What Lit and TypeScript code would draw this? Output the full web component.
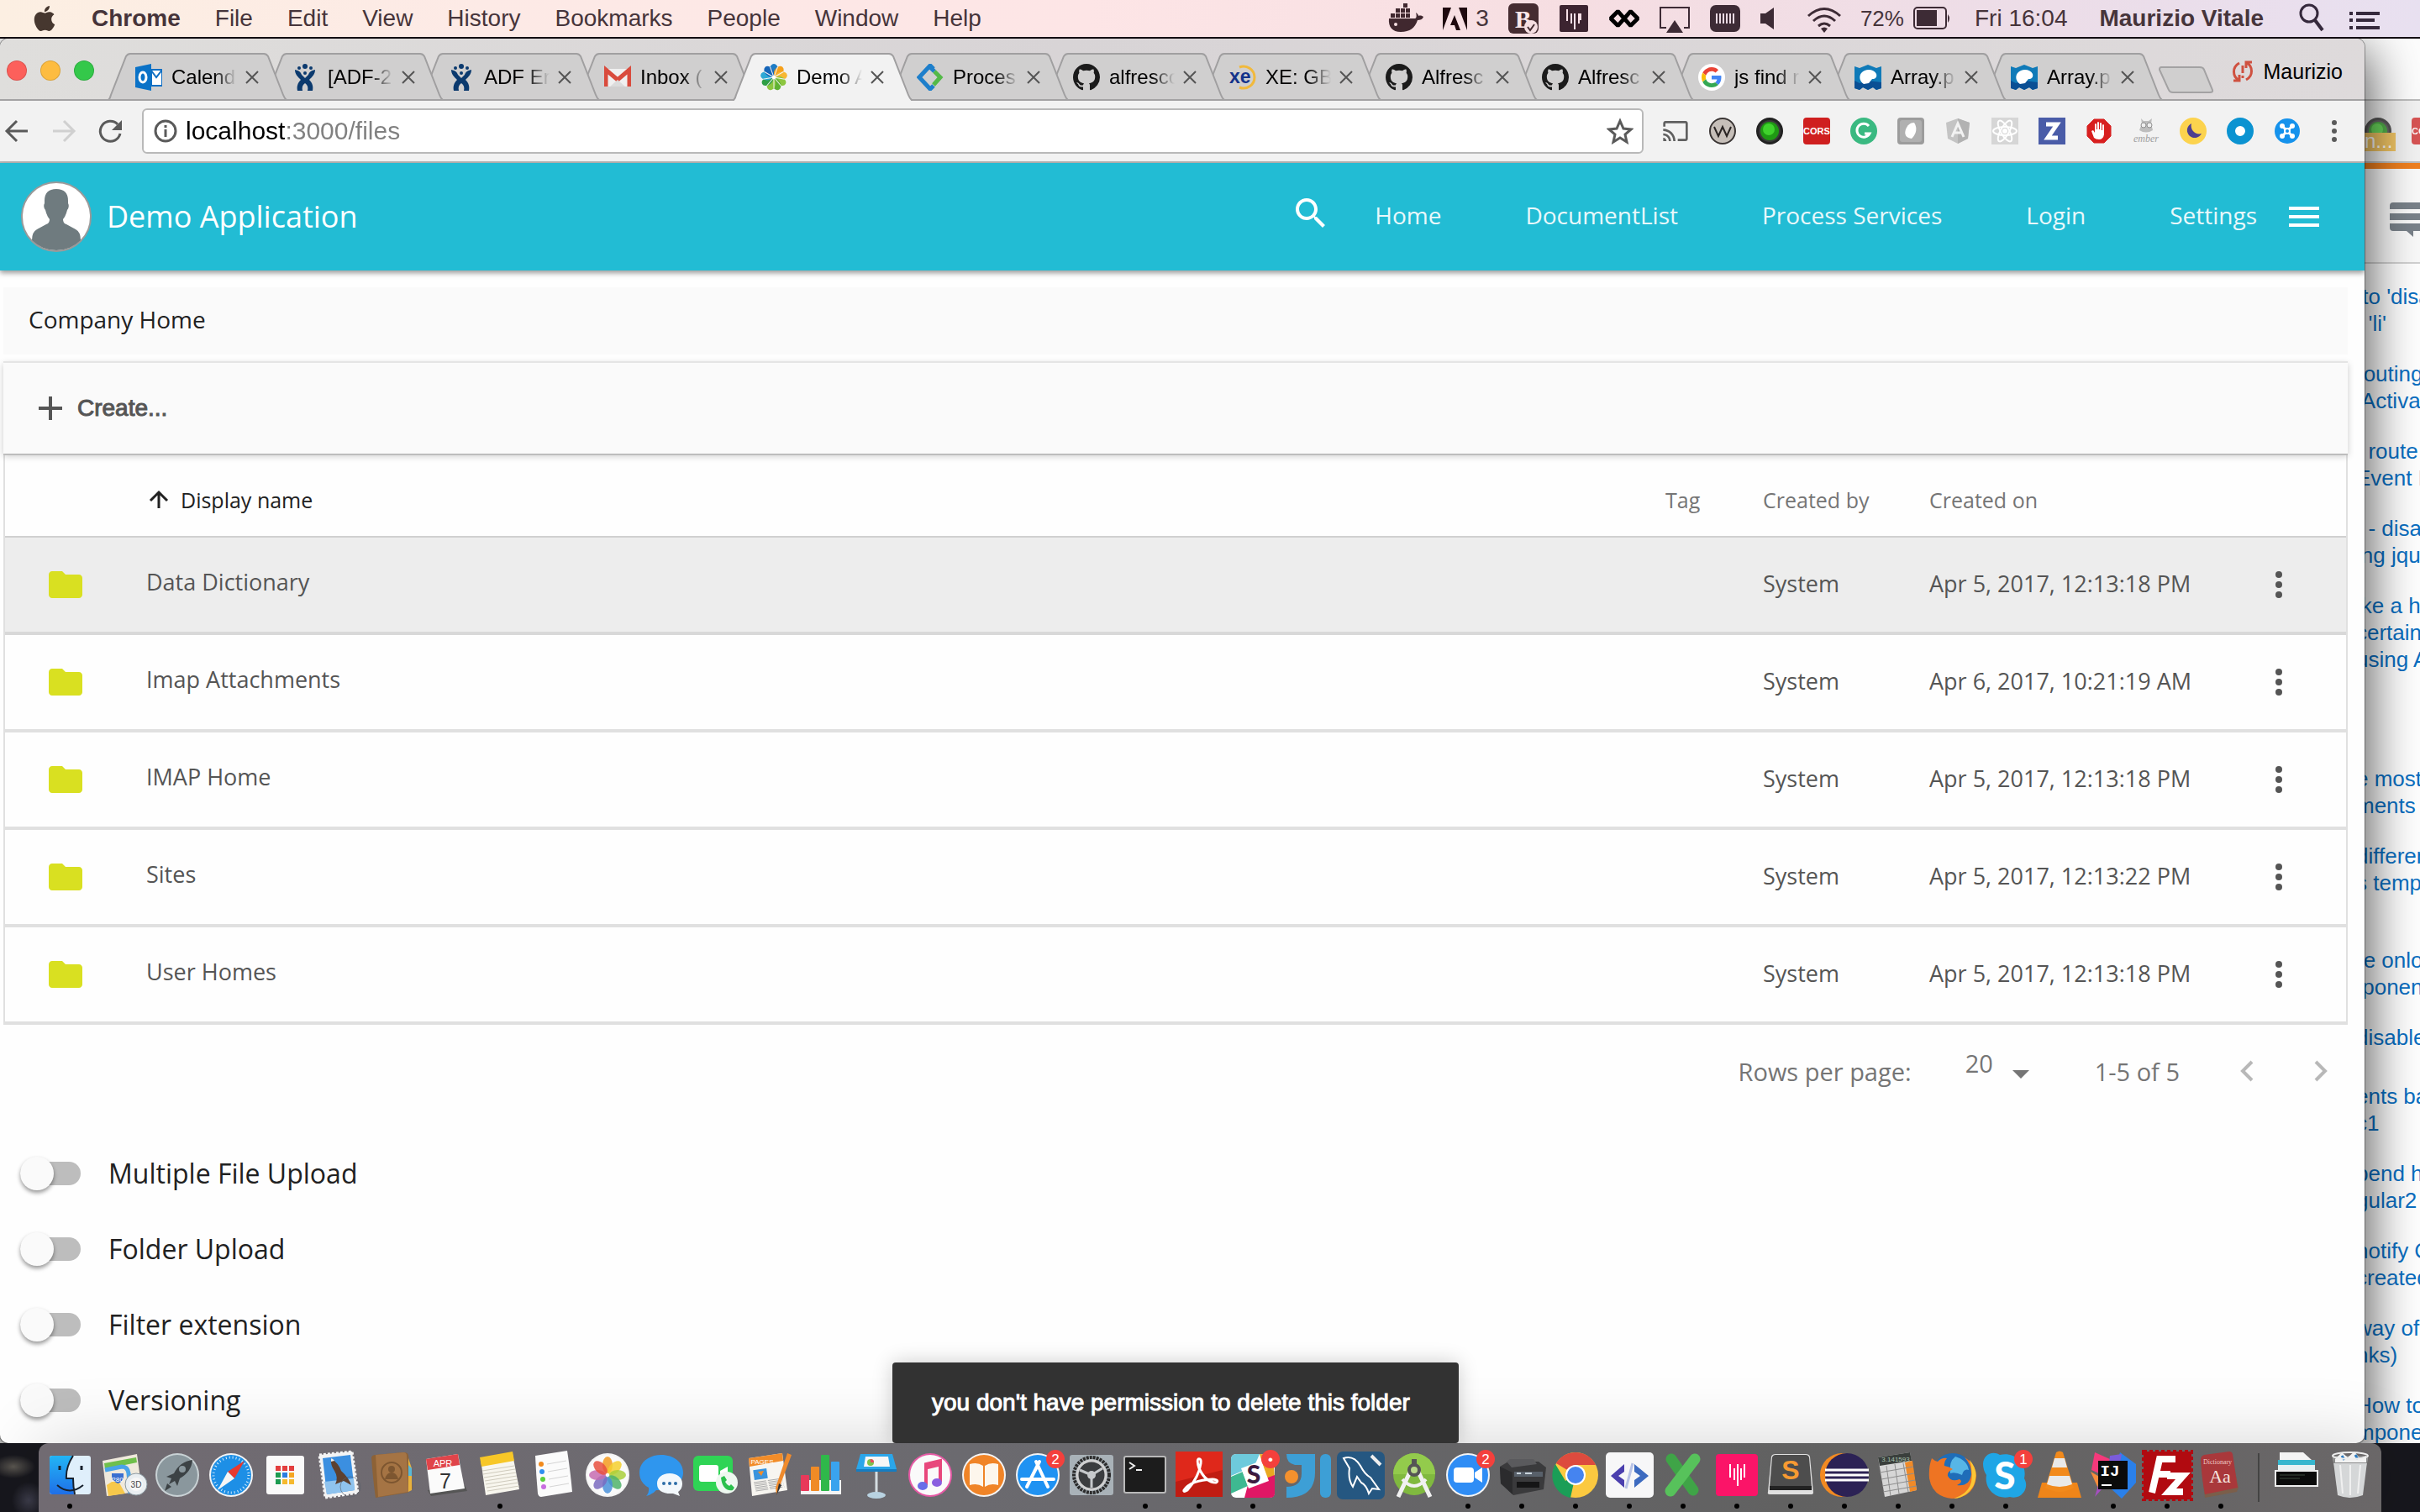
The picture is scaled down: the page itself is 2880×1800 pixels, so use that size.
import { LitElement, html, css, svg, TemplateResult, SVGTemplateResult } from "lit";
import { customElement } from "lit/decorators.js";
import { classMap } from "lit/directives/class-map.js";
import { styleMap } from "lit/directives/style-map.js";

const icon = (cls: string, box: string, body: SVGTemplateResult) =>
  html`<svg class=${cls} viewBox=${box} aria-hidden="true">${body}</svg>`;

/* ---------- menu bar ---------- */

const APPLE = svg`<path fill="#46372f" d="M12.152 6.896c-.948 0-2.415-1.078-3.96-1.04-2.04.027-3.91 1.183-4.961 3.014-2.117 3.675-.546 9.103 1.519 12.09 1.013 1.454 2.208 3.09 3.792 3.039 1.52-.065 2.09-.987 3.935-.987 1.831 0 2.35.987 3.96.948 1.637-.026 2.676-1.48 3.676-2.948 1.156-1.688 1.636-3.325 1.662-3.415-.039-.013-3.182-1.221-3.22-4.857-.026-3.04 2.48-4.494 2.597-4.559-1.429-2.09-3.623-2.324-4.39-2.376-2-.156-3.675 1.09-4.61 1.09zM15.53 3.83c.843-1.012 1.4-2.427 1.245-3.83-1.207.052-2.662.805-3.532 1.818-.78.896-1.454 2.338-1.273 3.714 1.338.104 2.715-.688 3.559-1.701"/>`;

const MENUS = ["File", "Edit", "View", "History", "Bookmarks", "People", "Window", "Help"];

const STATUS: Record<string, SVGTemplateResult> = {
  docker: svg`<g fill="#40282f"><path d="M1 20h31c2 0 2-4 1-7 2 1 3 3 3 4 2-1 5 0 6 1-1 3-4 4-7 4-3 9-9 14-20 14C5 36 0 30 1 20z"/><path d="M3 14h5v5H3zM9 14h5v5H9zM15 14h5v5h-5zM21 14h5v5h-5zM9 8h5v5H9zM15 8h5v5h-5zM21 8h5v5h-5zM18 2h5v5h-5z" /></g><circle cx="9" cy="27" r="2" fill="#f6dfe2"/>`,
  adobe: svg`<path fill="#1f0a0f" d="M1 7h10L1 34zM20 7h10v27zM15 16l7 18h-5l-2-6h-5z"/>`,
  bbox: svg`<rect x="1" y="2" width="36" height="36" rx="6" fill="#452c31"/><text x="9" y="31" font-family="Liberation Serif, serif" font-weight="bold" font-size="29" fill="#fbe8ea">B</text><circle cx="28" cy="30" r="8" fill="#f6dfe2"/><path d="M24 30l3 4 5-7" fill="none" stroke="#452c31" stroke-width="2"/>`,
  bars: svg`<rect x="2" y="4" width="34" height="32" rx="2" fill="#3c2430"/><path d="M11 9v14M16 14v12M20 14v19M25 14v12M27 14v8" stroke="#f6dfe6" stroke-width="2"/>`,
  loop: svg`<g fill="none" stroke="#000" stroke-width="5"><path d="M3 20l9-9 16 18 9-9-9-9-16 18z" stroke-linejoin="bevel"/></g>`,
  airplay: svg`<path d="M9 31H2V7h34v24h-6" fill="none" stroke="#3d2b35" stroke-width="2"/><path d="M19 22l10 15H9z" fill="#3d2b35"/>`,
  memory: svg`<rect x="1" y="4" width="36" height="32" rx="7" fill="#3d2b35"/><path d="M9 14v12M13 14v12M17 14v12M21 14v12M25 14v12M29 14v12" stroke="#e9d9e2" stroke-width="2"/>`,
  speaker: svg`<path d="M1 14h6l10-7v26L7 26H1z" fill="#3d2b35"/>`,
  wifi: svg`<g fill="none" stroke="#3d2b35" stroke-width="3"><path d="M2 17q19-17 38 0M8 23q13-12 26 0M14 29q7-6 14 0"/></g><path d="M21 37l-4-5q4-3 8 0z" fill="#3d2b35"/>`,
  battery: svg`<rect x="2" y="7" width="38" height="25" rx="4" fill="none" stroke="#3d2b35" stroke-width="2"/><rect x="5" y="10" width="24" height="19" fill="#3d2b35"/><path d="M42 15q4 5 0 10z" fill="#3d2b35"/>`,
  search: svg`<circle cx="12" cy="14" r="10" fill="none" stroke="#35293c" stroke-width="3"/><path d="M19 22l9 12" stroke="#35293c" stroke-width="4"/>`,
  list: svg`<path d="M0 14h4M8 14h28M0 22h4M8 22h22M0 31h4M8 31h28" stroke="#35293c" stroke-width="4"/>`,
};

@customElement("menu-bar")
class MenuBar extends LitElement {
  static styles = css`
    :host { display: block; }
    .bar { display: flex; align-items: center; justify-content: space-between; height: 44px; border-bottom: 2px solid #120d12; padding: 0 46px 0 38px;
      background: linear-gradient(90deg, #fcefe2 0, #fdeae6 20%, #fde5e6 45%, #f6dee2 65%, #ecdde8 85%, #e8e0f0 100%);
      font: 28px/44px "Liberation Sans", Arial, sans-serif; color: #46343a; white-space: nowrap; }
    .side { display: flex; align-items: center; gap: 41px; }
    .tray { display: flex; align-items: center; gap: 22px; }
    .item { font: inherit; color: inherit; border: 0; background: none; padding: 0; }
    .bold { font-weight: bold; }
    .apple { width: 30px; height: 32px; }
    .pair { display: flex; align-items: center; gap: 10px; }
    .pct { font-size: 26px; }
    .clock { display: flex; gap: 38px; padding: 0 20px 0 6px; }
    .end { display: flex; align-items: center; gap: 30px; }
    .w18 { width: 34px; height: 40px; }
    .w30 { width: 30px; height: 40px; }
    .w36 { width: 38px; height: 40px; }
    .w42 { width: 42px; height: 40px; }
    .w46 { width: 46px; height: 40px; }
  `;
  render() {
    return html`<div class="bar">
      <div class="side">
        ${icon("apple", "0 0 24 24", APPLE)}
        <button class="item bold">Chrome</button>
        ${MENUS.map((m) => html`<button class="item">${m}</button>`)}
      </div>
      <div class="tray">
        ${icon("w42", "0 0 42 40", STATUS.docker)}
        <div class="pair">${icon("w30", "0 0 30 40", STATUS.adobe)}<span>3</span></div>
        ${icon("w36", "0 0 38 40", STATUS.bbox)}
        ${icon("w36", "0 0 38 40", STATUS.bars)}
        ${icon("w36", "0 0 40 40", STATUS.loop)}
        ${icon("w36", "0 0 38 40", STATUS.airplay)}
        ${icon("w36", "0 0 38 40", STATUS.memory)}
        ${icon("w18", "0 0 34 40", STATUS.speaker)}
        ${icon("w42", "0 0 42 40", STATUS.wifi)}
        <div class="pair"><span class="pct">72%</span>${icon("w46", "0 0 46 40", STATUS.battery)}</div>
        <div class="clock"><span>Fri 16:04</span><span class="bold">Maurizio Vitale</span></div>
        <div class="end">${icon("w30", "0 0 30 40", STATUS.search)}${icon("w36", "0 0 38 40", STATUS.list)}</div>
      </div>
    </div>`;
  }
}

/* ---------- browser ---------- */

const GITHUB = svg`<path transform="scale(2)" fill="#1b1b1b" d="M8 0C3.58 0 0 3.58 0 8c0 3.54 2.29 6.53 5.47 7.59.4.07.55-.17.55-.38 0-.19-.01-.82-.01-1.49-2.01.37-2.53-.49-2.69-.94-.09-.23-.48-.94-.82-1.13-.28-.15-.68-.52-.01-.53.63-.01 1.08.58 1.23.82.72 1.21 1.87.87 2.33.66.07-.52.28-.87.51-1.07-1.78-.2-3.64-.89-3.64-3.95 0-.87.31-1.59.82-2.15-.08-.2-.36-1.02.08-2.12 0 0 .67-.21 2.2.82.64-.18 1.32-.27 2-.27.68 0 1.36.09 2 .27 1.53-1.04 2.2-.82 2.2-.82.44 1.1.16 1.92.08 2.12.51.56.82 1.27.82 2.15 0 3.07-1.87 3.75-3.65 3.95.29.25.54.73.54 1.48 0 1.07-.01 1.93-.01 2.2 0 .21.15.46.55.38A8.013 8.013 0 0016 8c0-4.42-3.58-8-8-8z"/>`;
const JIRA = svg`<g fill="#0b3a6e"><circle cx="9" cy="5" r="2"/><circle cx="16" cy="3" r="3"/><circle cx="23" cy="5" r="2"/><path d="M4 7c5 1 7 3 8 6l4 4 4-4c1-3 3-5 8-6 0 5-3 8-7 12 4 4 5 8 4 13h-6c1-4 0-7-3-9-3 2-4 5-3 9H7c-1-5 0-9 4-13-4-4-7-7-7-12z"/><circle cx="16" cy="11" r="2"/></g>`;
const MDN = svg`<path d="M0 3l6 2L16 1l10 4 6-2v26l-6 2-4-3-6 3-6-3-4 3-6-2z" fill="#0f7ab8"/><path d="M0 20l6 3 10-3 16 2v7l-6 2-4-3-6 3-6-3-4 3-6-2z" fill="#0a4f94"/><path d="M8 11c5-6 15-5 18 1 1 4-1 6-5 6l-4 5-6 1c-5-3-6-9-3-13z" fill="#fff"/>`;
const petals = (colors: string[], r: number, w: number, h: number, c: number, o = 1) =>
  colors.map((f, i) => svg`<ellipse cx=${c} cy=${c - r} rx=${w} ry=${h} fill=${f} opacity=${o} transform="rotate(${(i * 360) / colors.length} ${c} ${c})"/>`);
const ALFRESCO = svg`${petals(["#1f7cc4", "#f6a01a", "#f7b733", "#8cc63f", "#5fb233", "#8cc63f", "#2f9e44", "#2fa8d5", "#1565b8"], 9, 5, 7, 16)}<g stroke="#f2f2f2">${[0, 1, 2, 3, 4, 5, 6, 7, 8].map((i) => svg`<path d="M16 16V3" transform="rotate(${i * 40 + 20} 16 16)"/>`)}</g><circle cx="16" cy="16" r="2" fill="#fff"/>`;

interface Tab { text: string; fav: SVGTemplateResult; active?: boolean }
const TABS: Tab[] = [
  { text: "Calend", fav: svg`<path d="M19 7h13v19H19z" fill="#fff" stroke="#1170c4" stroke-width="2"/><path d="M19 8l6 8 7-9" fill="none" stroke="#1170c4" stroke-width="2"/><path d="M0 4l19-4v32L0 28z" fill="#0a72c7"/><ellipse cx="9" cy="16" rx="4" ry="6" fill="none" stroke="#fff" stroke-width="3"/>` },
  { text: "[ADF-2", fav: JIRA },
  { text: "ADF Er", fav: JIRA },
  { text: "Inbox (", fav: svg`<path d="M2 6h28v21H2z" fill="#f0f0f0"/><path d="M2 27V7l14 12L30 7v20" fill="none" stroke="#d94b3d" stroke-width="5"/><path d="M7 27l9-8 9 8z" fill="#dcdcdc"/>` },
  { text: "Demo A", fav: ALFRESCO, active: true },
  { text: "Proces", fav: svg`<path d="M20 6l-4-4L3 16l13 14 4-4" fill="none" stroke="#1e7fcb" stroke-width="5"/><path d="M15 3l6 6" stroke="#1e7fcb" stroke-width="5"/><path d="M21 9l7 7-8 9" fill="none" stroke="#54b948" stroke-width="5"/>` },
  { text: "alfresco", fav: GITHUB },
  { text: "XE: GB", fav: svg`<path d="M12 4a13 13 0 1 1 0 24" fill="none" stroke="#f1b93c" stroke-width="3"/><text x="0" y="23" font-family="Liberation Sans, sans-serif" font-weight="bold" font-size="23" fill="#14338a">xe</text>` },
  { text: "Alfresc", fav: GITHUB },
  { text: "Alfresc", fav: GITHUB },
  { text: "js find r", fav: svg`<circle cx="16" cy="16" r="16" fill="#fff"/><g transform="translate(4 4) scale(.5)"><path fill="#EA4335" d="M24 9.500c3.540 0 6.710 1.220 9.210 3.600l6.850-6.850C35.900 2.380 30.470 0 24 0 14.620 0 6.510 5.380 2.560 13.220l7.980 6.190C12.430 13.720 17.740 9.500 24 9.500z"/><path fill="#4285F4" d="M46.980 24.550c0-1.570-.15-3.090-.38-4.550H24v9.020h12.940c-.58 2.960-2.260 5.480-4.780 7.180l7.730 6c4.510-4.180 7.090-10.360 7.090-17.650z"/><path fill="#FBBC05" d="M10.530 28.590c-.48-1.450-.76-2.990-.76-4.590s.27-3.140.76-4.590l-7.980-6.190C.92 16.460 0 20.120 0 24c0 3.880.92 7.540 2.560 10.780l7.970-6.190z"/><path fill="#34A853" d="M24 48c6.480 0 11.930-2.130 15.890-5.810l-7.730-6c-2.150 1.450-4.920 2.300-8.160 2.300-6.260 0-11.570-4.220-13.470-9.910l-7.980 6.190C6.510 42.620 14.620 48 24 48z"/></g>` },
  { text: "Array.p", fav: MDN },
  { text: "Array.p", fav: MDN },
];

const LED = svg`<circle cx="16" cy="16" r="16" fill="#222"/><circle cx="16" cy="16" r="13" fill="#3a3a3a"/><circle cx="16" cy="16" r="11" fill="#1f9a14"/><circle cx="15" cy="14" r="7" fill="#3fd22c"/>`;
const CORS = svg`<rect width="32" height="32" rx="4" fill="#cf1f1f"/><text x="16" y="20" text-anchor="middle" font-family="Liberation Sans, sans-serif" font-weight="bold" font-size="11" fill="#fff">CORS</text>`;

const EXTENSIONS: [string, SVGTemplateResult][] = [
  ["Cast", svg`<path transform="scale(1.333)" fill="#5f5f5f" d="M21 3H3c-1.100 0-2 .9-2 2v3h2V5h18v14h-7v2h7c1.100 0 2-.9 2-2V5c0-1.100-.9-2-2-2zM1 18v3h3c0-1.660-1.340-3-3-3zm0-4v2c2.760 0 5 2.240 5 5h2c0-3.870-3.130-7-7-7zm0-4v2c4.970 0 9 4.030 9 9h2c0-6.080-4.930-11-11-11z"/>`],
  ["Wappalyzer", svg`<circle cx="16" cy="16" r="15" fill="#c6bfb9" stroke="#3a3534" stroke-width="2"/><path d="M6 11l5 11 5-11 5 11 5-11" fill="none" stroke="#2a2524" stroke-width="2"/>`],
  ["Status", LED],
  ["CORS", CORS],
  ["Grammarly", svg`<circle cx="16" cy="16" r="16" fill="#3ab981"/><path d="M22 10a8 8 0 1 0 1 9h-6" fill="none" stroke="#fff" stroke-width="3"/>`],
  ["Badge", svg`<rect width="32" height="32" rx="4" fill="#9c9c9c"/><rect x="3" y="3" width="26" height="26" rx="3" fill="#b0b0b0"/><path d="M20 6c4 6 3 13-3 19-7-1-9-5-7-11 2-5 5-8 10-8z" fill="#fff"/>`],
  ["Augury", svg`<path d="M16 1l14 5-2 19-12 6-12-6L2 6z" fill="#c4c4c4"/><path d="M16 1l14 5-2 19-12 6z" fill="#b2b2b2"/><path d="M9 23l7-16 7 16M12 18h8" fill="none" stroke="#f2f2f2" stroke-width="3"/>`],
  ["React", svg`<rect width="32" height="32" fill="#d6d6d6"/><g fill="none" stroke="#fff" stroke-width="2"><ellipse cx="16" cy="16" rx="14" ry="5"/><ellipse cx="16" cy="16" rx="14" ry="5" transform="rotate(60 16 16)"/><ellipse cx="16" cy="16" rx="14" ry="5" transform="rotate(120 16 16)"/></g><circle cx="16" cy="16" r="3" fill="#fff"/>`],
  ["Zotero", svg`<rect width="32" height="32" fill="#4a5ca8"/><path d="M9 8h13L11 24h12" fill="none" stroke="#fff" stroke-width="5"/>`],
  ["AdBlock", svg`<path d="M10 1h12l9 9v12l-9 9H10l-9-9V10z" fill="#d81f1f" stroke="#eee"/><path d="M10 24l-3-8 2-1 2 3V8q1-2 2 0v6h1V6q1-2 2 0v8h1V7q1-2 2 0v8h1V9q1-2 2 0v11q-1 6-6 6-4 0-6-2z" fill="#fff"/>`],
  ["Ember", svg`<path d="M10 1l3 3h6l4-3-1 6 2 8q-8 5-16 0l3-8z" fill="#bdbdbd"/><circle cx="13" cy="9" r="3" fill="#eee" stroke="#8f8f8f"/><circle cx="20" cy="9" r="3" fill="#eee" stroke="#8f8f8f"/><text x="16" y="29" text-anchor="middle" font-family="Liberation Serif, serif" font-style="italic" font-size="12" fill="#a0a0a0">ember</text>`],
  ["Moon", svg`<circle cx="16" cy="16" r="16" fill="#fcd34e"/><path d="M14 7a9 9 0 1 0 12 12c-7 2-14-4-12-12z" fill="#4e3f90"/>`],
  ["Ring", svg`<circle cx="16" cy="16" r="11" fill="#fff" stroke="#0b93d1" stroke-width="10"/>`],
  ["Hub", svg`<circle cx="16" cy="16" r="15" fill="#1592ec"/><g fill="none" stroke="#fff" stroke-width="3"><path d="M11 11l10 10M21 11L11 21"/></g><g fill="#fff"><circle cx="10" cy="10" r="3"/><circle cx="22" cy="10" r="3"/><circle cx="10" cy="22" r="3"/><circle cx="22" cy="22" r="3"/></g><circle cx="16" cy="16" r="4" fill="#fff"/><circle cx="16" cy="16" r="2" fill="#1592ec"/>`],
];

@customElement("browser-chrome")
class BrowserChrome extends LitElement {
  static styles = css`
    :host { display: block; font-family: "Liberation Sans", Arial, sans-serif; }
    button { border: 0; background: none; padding: 0; display: block; }
    .strip { display: flex; height: 74px; padding: 0 26px 0 8px; box-sizing: border-box;
      background: linear-gradient(90deg, #dfdedc, #d8d4d6 45%, #dedadb); box-shadow: inset 0 -2px #a3a2a3; }
    .lights { display: flex; gap: 16px; padding-top: 26px; width: 120px; }
    .light { width: 24px; height: 24px; border-radius: 50%; box-sizing: border-box; border: 1px solid #0002; }
    .red { background: #fc605b; } .amber { background: #fdbc40; } .green { background: #34c84a; }
    .tabs { display: flex; padding-top: 17px; }
    .tab { position: relative; width: 214px; height: 57px; margin-right: -28px; flex: none; }
    .shape { position: absolute; inset: 0; width: 214px; height: 57px; }
    .row { position: relative; display: flex; align-items: center; height: 57px; padding: 0 33px; }
    .fav { width: 32px; height: 32px; flex: none; margin-right: 11px; }
    .name { font-size: 24px; line-height: 32px; width: 78px; overflow: hidden; white-space: nowrap; color: #000; text-align: left; -webkit-mask-image: linear-gradient(90deg, #000 65%, transparent); }
    .close { width: 16px; height: 16px; margin-left: 10px; }
    .x { width: 16px; height: 16px; display: block; }
    .plus { width: 68px; height: 34px; margin: 32px 0 0 22px; }
    .plus-shape { width: 68px; height: 34px; display: block; }
    .user { display: flex; align-items: center; gap: 12px; height: 28px; margin: 25px 0 0 auto; font-size: 25px; }
    .alert { width: 26px; height: 26px; }
    .bar { display: flex; align-items: center; height: 74px; box-sizing: border-box; padding: 0 32px 0 4px; background: #f2f2f2; border-bottom: 2px solid #b9b7b6; }
    .nav { display: flex; gap: 24px; width: 165px; }
    .ico { width: 32px; height: 32px; display: block; }
    .box { display: flex; align-items: center; flex: 1; height: 54px; box-sizing: border-box; border: 2px solid #b9b9b9; border-radius: 6px; background: #fff; padding: 0 10px; gap: 8px; }
    .url { flex: 1; border: 0; padding: 0; outline: 0; font: 30px/40px "Liberation Sans", Arial, sans-serif; color: transparent;
      background: linear-gradient(90deg, #000 118px, #808080 118px); -webkit-background-clip: text; background-clip: text; }
    .ext { display: flex; gap: 24px; margin-left: 22px; }
    .more { width: 8px; height: 32px; margin-left: 36px; }
    .dots { width: 8px; height: 32px; display: block; }
  `;
  render() {
    return html`
      <div class="strip">
        <div class="lights"><span class="light red"></span><span class="light amber"></span><span class="light green"></span></div>
        <div class="tabs">
          ${TABS.map((t, i) => html`<div class="tab" style=${styleMap({ zIndex: String(t.active ? 40 : 30 - i) })}>
            <svg class="shape" viewBox="0 0 214 57"><path d="M0 57Q3 55 4 50L22 4Q24 1 27 1H186Q189 1 191 4L209 50Q211 55 214 57" fill=${t.active ? "#f2f2f2" : "#d0cfcf"} stroke="#a09fa0" stroke-width="2"/>${t.active ? "" : svg`<path d="M0 56H214" stroke="#a3a2a3" stroke-width="2"/>`}</svg>
            <div class="row">${icon("fav", "0 0 32 32", t.fav)}<span class="name">${t.text}</span>
              <button class="close" aria-label="Close tab">${icon("x", "0 0 16 16", svg`<path d="M1 1l14 14M15 1L1 15" stroke="#555" stroke-width="2"/>`)}</button></div>
          </div>`)}
        </div>
        <button class="plus" aria-label="New tab">${icon("plus-shape", "0 0 68 34", svg`<path d="M4 2H50q4 0 5 3l10 24q1 3-3 3H18q-4 0-5-3L2 5q0-3 2-3z" fill="#d0cfcf" stroke="#a3a2a3" stroke-width="2"/>`)}</button>
        <button class="user">${icon("alert", "0 0 26 26", svg`<g fill="none" stroke="#cf5140" stroke-width="3"><path d="M9 3C0 8 1 19 8 23M2 24h7v-7M17 23c9-5 8-16 1-20M24 2h-7v7"/><path d="M13 6v9M13 18v3"/></g>`)}<span>Maurizio</span></button>
      </div>
      <div class="bar">
        <div class="nav">
          <button aria-label="Back">${icon("ico", "0 0 32 32", svg`<path d="M29 16H4M16 4L4 16l12 12" fill="none" stroke="#5a5a5a" stroke-width="3"/>`)}</button>
          <button aria-label="Forward">${icon("ico", "0 0 32 32", svg`<path d="M3 16h25M16 4l12 12-12 12" fill="none" stroke="#d0d0d0" stroke-width="3"/>`)}</button>
          <button aria-label="Reload">${icon("ico", "0 0 32 32", svg`<path d="M27 19A12 12 0 1 1 24 8" fill="none" stroke="#5a5a5a" stroke-width="3"/><path d="M29 3v12H17z" fill="#5a5a5a"/>`)}</button>
        </div>
        <div class="box">
          ${icon("ico", "0 0 32 32", svg`<circle cx="16" cy="16" r="12" fill="none" stroke="#5a5a5a" stroke-width="3"/><path d="M16 14v9M16 9v3" stroke="#5a5a5a" stroke-width="3"/>`)}
          <input class="url" aria-label="Address" value="localhost:3000/files" />
          <button aria-label="Bookmark">${icon("ico", "0 0 32 32", svg`<path d="M16 4l4 9 9 1-7 6 2 9-8-5-8 5 2-9-7-6 9-1z" fill="none" stroke="#5a5a5a" stroke-width="3"/>`)}</button>
        </div>
        <div class="ext">${EXTENSIONS.map(([n, s]) => html`<button aria-label=${n}>${icon("ico", "0 0 32 32", s)}</button>`)}</div>
        <button class="more" aria-label="Menu">${icon("dots", "0 0 8 32", svg`<g fill="#5a5a5a"><circle cx="4" cy="6" r="3"/><circle cx="4" cy="16" r="3"/><circle cx="4" cy="26" r="3"/></g>`)}</button>
      </div>`;
  }
}

/* ---------- demo application ---------- */

const MORE = svg`<g fill="#555"><circle cx="16" cy="4" r="4"/><circle cx="16" cy="16" r="4"/><circle cx="16" cy="28" r="4"/></g>`;
const ROWS = [
  ["Data Dictionary", "Apr 5, 2017, 12:13:18 PM"],
  ["Imap Attachments", "Apr 6, 2017, 10:21:19 AM"],
  ["IMAP Home", "Apr 5, 2017, 12:13:18 PM"],
  ["Sites", "Apr 5, 2017, 12:13:22 PM"],
  ["User Homes", "Apr 5, 2017, 12:13:18 PM"],
];

@customElement("demo-page")
class DemoPage extends LitElement {
  static styles = css`
    :host { display: block; font-family: "Open Sans", "Noto Sans", sans-serif; color: #212121; }
    button { border: 0; background: none; padding: 0; font: inherit; color: inherit; }
    .head { position: relative; display: flex; align-items: center; justify-content: space-between; height: 128px; padding: 0 54px 0 25px; background: #22bcd4; color: #fff; box-shadow: 0 3px 6px #0006; }
    .brand { display: flex; align-items: center; gap: 18px; font-size: 36px; line-height: 48px; }
    .avatar { width: 84px; height: 84px; }
    .links { display: flex; align-items: center; }
    .find { width: 40px; height: 40px; margin: 0 56px 8px 0; display: block; }
    .glyph { width: 48px; height: 48px; display: block; margin: -4px; }
    .list { display: flex; gap: 100px; padding-bottom: 4px; }
    .link { color: #e9f8fb; text-decoration: none; font-size: 28px; line-height: 40px; font-weight: 500; }
    .burger { width: 36px; height: 36px; margin-left: 38px; display: block; }
    .main { padding: 20px 20px 0 4px; }
    .crumb { display: flex; align-items: center; height: 80px; padding: 0 30px 4px; background: #fafafa; font-size: 28px; font-weight: 500; box-sizing: border-box; margin-bottom: 8px; }
    .tools { position: relative; display: flex; align-items: center; height: 110px; box-sizing: border-box; border-top: 2px solid #e4e4e4; background: #fafafa; padding: 0 42px; box-shadow: 0 2px #bdbdbd, 0 3px 8px #0003; }
    .create { display: flex; align-items: center; gap: 18px; color: #555; font: 28px/40px "Liberation Sans", Arial, sans-serif; -webkit-text-stroke: 1px #555; }
    .add { width: 28px; height: 28px; }
    .docs { width: 100%; table-layout: fixed; border-collapse: separate; border-spacing: 0; border: solid #e0e0e0; border-width: 0 2px; }
    .c-icon { width: 168px; } .c-tag { width: 116px; } .c-by { width: 198px; } .c-on { width: 336px; } .c-menu { width: 160px; }
    th { height: 100px; box-sizing: border-box; padding: 11px 0 0; text-align: left; font-size: 25px; font-weight: 400; color: #757575; border-bottom: 2px solid #d0d0d0; }
    td { height: 116px; box-sizing: border-box; padding: 0; font-size: 27px; color: #555; border-bottom: 4px solid #e0e0e0; }
    .title { padding-bottom: 8px; }
    .info { padding-bottom: 4px; }
    .sorted { display: flex; align-items: center; gap: 13px; color: #212121; }
    .arrow { width: 28px; height: 28px; }
    .on td { background: #ededed; border-bottom-color: #d8d8d8; }
    .folder { width: 48px; height: 48px; margin-left: 48px; display: block; }
    .menu { display: block; margin: 0 auto; width: 32px; height: 32px; }
    .m { width: 32px; height: 32px; display: block; }
    .pages { display: flex; align-items: center; justify-content: flex-end; height: 110px; padding-right: 8px; font-size: 29px; color: #757575; }
    .rows { display: flex; align-items: center; gap: 64px; }
    .pick { display: flex; align-items: flex-end; }
    .size { appearance: none; border: 0; background: none; padding: 0 0 18px; margin: 0; width: 56px; font: 29px/40px "Open Sans", sans-serif; color: #757575; }
    .caret { width: 20px; height: 10px; margin-bottom: 20px; }
    .range { padding: 0 56px 0 78px; }
    .turn { width: 48px; height: 48px; }
    .step { display: flex; gap: 40px; }
    .toggles { display: flex; flex-direction: column; gap: 50px; padding: 47px 20px 0; }
    .toggle { display: flex; align-items: center; gap: 33px; height: 40px; font-size: 32px; line-height: 40px; }
    .check { appearance: none; position: relative; width: 72px; height: 28px; margin: 0; border-radius: 14px; background: #bdbdbd; }
    .check::before { content: ""; position: absolute; left: 0; top: -6px; width: 40px; height: 40px; border-radius: 50%; background: #fafafa; box-shadow: 0 3px 5px #0006; }
  `;
  render() {
    return html`
      <header class="head">
        <div class="brand">
          ${icon("avatar", "0 0 84 84", svg`<circle cx="42" cy="42" r="41" fill="#fff" stroke="#9a9a9a" stroke-width="2"/><path d="M28 23q0-14 14-14t14 14v3q2 4-1 8-2 8-5 11 0 5 4 6l11 6q6 3 6 13-12 12-29 12T13 70q0-10 6-13l11-6q4-1 4-6-3-3-5-11-3-4-1-8z" fill="#6f7b7f"/>`)}
          <span>Demo Application</span>
        </div>
        <nav class="links">
          <button class="find" aria-label="Search">${icon("glyph", "0 0 24 24", svg`<path fill="#fff" d="M15.500 14h-.79l-.28-.27C15.410 12.590 16 11.110 16 9.500 16 5.910 13.090 3 9.500 3S3 5.910 3 9.500 5.910 16 9.500 16c1.610 0 3.090-.59 4.230-1.570l.27.28v.79l5 4.990L20.490 19l-4.990-5zm-6 0C7.010 14 5 11.990 5 9.500S7.010 5 9.500 5 14 7.010 14 9.500 11.990 14 9.500 14z"/>`)}</button>
          <div class="list">${["Home", "DocumentList", "Process Services", "Login", "Settings"].map((l) => html`<a class="link" href="#">${l}</a>`)}</div>
          <button class="burger" aria-label="Menu">${icon("b", "0 0 36 36", svg`<path d="M0 8h36M0 18h36M0 28h36" stroke="#fff" stroke-width="4"/>`)}</button>
        </nav>
      </header>
      <div class="main">
        <div class="crumb">Company Home</div>
        <div class="tools"><button class="create">${icon("add", "0 0 28 28", svg`<path d="M0 14h28M14 0v28" stroke="#555" stroke-width="4"/>`)}<span>Create...</span></button></div>
        <table class="docs">
          <colgroup><col class="c-icon" /><col /><col class="c-tag" /><col class="c-by" /><col class="c-on" /><col class="c-menu" /></colgroup>
          <thead><tr><th></th><th><div class="sorted">${icon("arrow", "0 0 28 28", svg`<path d="M15 24V5M5 15L15 5l10 10" fill="none" stroke="#212121" stroke-width="3"/>`)}<span>Display name</span></div></th><th>Tag</th><th>Created by</th><th>Created on</th><th></th></tr></thead>
          <tbody>${ROWS.map(([n, d], i) => html`<tr class=${classMap({ on: i === 0 })}>
            <td>${icon("folder", "0 0 24 24", svg`<path fill="#d9e021" d="M10 4H4c-1.100 0-1.990.9-1.990 2L2 18c0 1.100.9 2 2 2h16c1.100 0 2-.9 2-2V8c0-1.100-.9-2-2-2h-8l-2-2z"/>`)}</td>
            <td class="title">${n}</td><td></td><td class="info">System</td><td class="info">${d}</td>
            <td><button class="menu" aria-label="Actions">${icon("m", "0 0 32 32", MORE)}</button></td></tr>`)}</tbody>
        </table>
        <div class="pages">
          <div class="rows"><label for="size">Rows per page:</label>
            <div class="pick"><select id="size" class="size"><option>20</option></select>${icon("caret", "0 0 20 10", svg`<path d="M0 0h20L10 10z" fill="#757575"/>`)}</div></div>
          <span class="range">1-5 of 5</span>
          <div class="step">
            <button class="turn" aria-label="Previous">${icon("t", "0 0 48 48", svg`<path d="M30 13L19 24l11 11" fill="none" stroke="#b8b8b8" stroke-width="4"/>`)}</button>
            <button class="turn" aria-label="Next">${icon("t", "0 0 48 48", svg`<path d="M18 13l11 11-11 11" fill="none" stroke="#b8b8b8" stroke-width="4"/>`)}</button>
          </div>
        </div>
        <div class="toggles">${["Multiple File Upload", "Folder Upload", "Filter extension", "Versioning"].map((t) => html`<label class="toggle"><input class="check" type="checkbox" />${t}</label>`)}</div>
      </div>`;
  }
}

/* ---------- window behind ---------- */

const QUESTIONS: string[][] = [
  [" to 'disa", "  'li'"], ["routing", " Activa"], ["  route", "Event H"], ["  - disa", "ing jqu"],
  ["ike a h", "certain", "using A"], ["e most", "ments i"], ["differen", "s temp"],
  ["re onlo", " ponen"], ["disable"], ["ents ba", "c1"], ["pend h", "gular2"],
  ["notify C", "created"], ["way of", "nks)"], ["How to", "mponen"],
];
const GAPS = [0, 28, 28, 28, 28, 110, 28, 60, 28, 38, 28, 28, 28, 28];

@customElement("back-window")
class BackWindow extends LitElement {
  static styles = css`
    :host { display: block; background: #fff; font-family: "Liberation Sans", Arial, sans-serif; overflow: hidden; }
    .strip { height: 72px; background: #fdfdfd; border-bottom: 2px solid #bdbdbd; }
    .bar { display: flex; height: 72px; background: #f2f2f2; border-bottom: 2px solid #bdbdbd; }
    .ext { display: flex; gap: 24px; padding-top: 20px; position: relative; }
    .ico { width: 32px; height: 32px; flex: none; opacity: .75; }
    .note { position: absolute; left: 0; top: 38px; width: 37px; height: 22px; background: #f0c464; color: #fff; font-size: 24px; line-height: 20px; text-align: left; }
    .site { height: 120px; box-sizing: border-box; border-top: 7px solid #f0801f; border-bottom: 2px solid #d2d2d2; background: #fafafa; padding: 40px 0 0 30px; }
    .chat { width: 44px; height: 42px; display: block; }
    .list { margin: 0; padding: 23px 0 0; list-style: none; margin-left: -10px; }
    .q { font-size: 26px; line-height: 32px; white-space: pre; }
    .a { color: #0a6fc2; text-decoration: none; display: block; }
    .line { display: block; height: 32px; }
  `;
  render() {
    return html`<div class="strip"></div>
      <div class="bar"><div class="ext">${icon("ico", "0 0 32 32", LED)}${icon("ico", "0 0 32 32", CORS)}<span class="note">n...</span></div></div>
      <div class="site">${icon("chat", "0 0 44 42", svg`<g fill="#7a828a"><path d="M4 0h44v8H0V4q0-4 4-4zM0 13h48v8H0zM0 25h48v9H28v7l-8-7H4q-4 0-4-4z"/></g>`)}</div>
      <ul class="list">${QUESTIONS.map((q, i) => html`<li class="q" style=${styleMap({ paddingTop: `${GAPS[i]}px` })}><a class="a" href="#">${q.map((l) => html`<span class="line">${l}</span>`)}</a></li>`)}</ul>`;
  }
}

/* ---------- dock ---------- */

const txt = (x: number, y: number, size: number, fill: string, s: string, family = "Liberation Sans", weight = "400") =>
  svg`<text x=${x} y=${y} text-anchor="middle" font-family="${family}, sans-serif" font-weight=${weight} font-size=${size} fill=${fill}>${s}</text>`;
const badge = (s: string) => svg`<circle cx="53" cy="13" r="11" fill="#f4403c"/>${txt(53, 19, 17, "#fff", s)}`;
const disc = (fill: string, ring = "#f4f4f4") => svg`<circle cx="32" cy="32" r="26" fill=${ring}/><circle cx="32" cy="32" r="24" fill=${fill}/>`;
const range = (n: number) => Array.from({ length: n }, (_, i) => i);

interface App { name: string; art: SVGTemplateResult; on?: boolean }
const APPS: App[] = [
  { name: "Finder", on: true, art: svg`<rect x="8" y="9" width="49" height="46" rx="3" fill="#dfeffb"/><path d="M11 9h25q-9 14-8 27h8q0 10 1 19H11q-3 0-3-3V12q0-3 3-3z" fill="url(#g-blue)"/><path d="M36 9q-9 14-8 27h8q0 10 2 19M17 44q15 13 31 0" fill="none" stroke="#17202c" stroke-width="2"/><path d="M20 21v5M46 21v5" stroke="#17202c" stroke-width="3"/>` },
  { name: "Maps", art: svg`<path d="M7 15l41-8 6 44-42 6z" fill="#efe9dc"/><path d="M9 18l38-7 1 6-38 8z" fill="#6fbf4b"/><path d="M10 26l20-4q7 0 8 8l2 24" fill="none" stroke="#4aa3e8" stroke-width="5"/><path d="M12 44l12-8 10 18-20 3z" fill="#f7c84b"/><path d="M18 30h14q1 10-7 12-8-3-7-12z" fill="#3a6fd0"/>${txt(25, 40, 8, "#fff", "280")}<circle cx="47" cy="43" r="13" fill="#e9eef1" stroke="#8a98a0"/><circle cx="47" cy="43" r="8" fill="#f7f7f7"/>${txt(47, 47, 10, "#444", "3D")}` },
  { name: "Launchpad", art: svg`${disc("#8a979d", "#c9d2d5")}<path d="M50 14q-15 2-22 16l-9 4 6 2-3 7 7-4 3 6 3-9q14-8 15-22z" fill="#3c4245"/><circle cx="38" cy="25" r="4" fill="#8a979d"/><path d="M20 42l-3 9 8-5z" fill="#3c4245"/>` },
  { name: "Safari", art: svg`${disc("#1d8fe6")}<circle cx="32" cy="32" r="21" fill="none" stroke="#d4ecfb" stroke-width="3" stroke-dasharray="1 3"/><path d="M48 15L36 36l-8-8z" fill="#e8392f"/><path d="M16 50l12-22 8 8z" fill="#f5f5f5"/>` },
  { name: "Board", art: svg`<rect x="10" y="9" width="45" height="46" rx="3" fill="#fafafa"/>${["#e33e3e", "#e33e3e", "#e33e3e", "#1c9b50", "#2b7de1", "#f5a623", "#1c9b50", "#f5b92e", "#f5b92e"].map((f, i) => svg`<rect x=${21 + (i % 3) * 8} y=${21 + Math.floor(i / 3) * 8} width="6" height="6" fill=${f}/>`)}` },
  { name: "Mail", art: svg`<path d="M9 8l39-4 7 49-39 6z" fill="#f4f4f4" stroke="#f4f4f4" stroke-width="3" stroke-dasharray="3 2"/><path d="M13 12l33-4 5 42-33 5z" fill="#3b8fe0"/><path d="M15 40l35-4 1 14-33 5z" fill="#8fc3ee"/><path d="M23 12q9 6 12 15 9 8 12 17l-9-5-10 4q4-8-1-16-5-7-4-15z" fill="#5d4030"/><path d="M23 12q3 1 4 3l-4 1z" fill="#eee"/><circle cx="46" cy="46" r="12" fill="none" stroke="#58606a" opacity=".6"/>` },
  { name: "Contacts", art: svg`<path d="M12 8l33-3q6 0 6 4l5 39-6 5-38 6q-3-20-5-48 1-3 5-3z" fill="#8d6236"/><path d="M12 8l33-3q4 0 4 4l2 43-36 6z" fill="#a57444"/><path d="M51 12l4 12v26l-4 2z" fill="#e8b23c"/><path d="M51 20l4 4v9h-4z" fill="#58b8d8"/><circle cx="31" cy="29" r="12" fill="none" stroke="#7d5630" stroke-width="2"/><circle cx="31" cy="25" r="4" fill="#7d5630"/><path d="M23 37q2-8 8-8t8 8z" fill="#7d5630"/>` },
  { name: "Calendar", art: svg`<path d="M10 50l44-6 3 7-43 6z" fill="#555"/><path d="M8 13l38-6 8 41-41 6z" fill="#fbfbfb"/><path d="M8 13l38-6 2 13-38 6z" fill="#e0444a"/>${txt(28, 22, 11, "#fff", "APR")}${txt(31, 48, 25, "#333", "7")}` },
  { name: "Notes", on: true, art: svg`<path d="M9 13l38-6 8 42-40 7z" fill="#f8f6ee"/><path d="M8 11l39-7 2 11-39 7z" fill="#f7c727"/>${range(7).map((i) => svg`<path d="M${11 + i} ${27 + i * 4}l38-6" stroke="#cfcbbd"/>`)}` },
  { name: "Reminders", art: svg`<path d="M10 9l38-6q4 26 6 49l-37 6q-3 0-4-4-2-22-3-45z" fill="#fbfbfb"/>${["#f28a1c", "#2f8ef0", "#5ccf3d", "#c96ee0"].map((f, i) => svg`<circle cx=${17 + i * 1} cy=${19 + i * 9} r="3" fill=${f}/><path d="M${24 + i} ${19 + i * 9}l23-4" stroke="#d5d5d5"/>`)}` },
  { name: "Photos", art: svg`${disc("#fafafa")}${petals(["#f39a1e", "#f5cf2d", "#a9cf3a", "#4fb36a", "#4a90d9", "#7a6bc0", "#c56bb0", "#e8503f"], 12, 6, 10, 32, 0.85)}` },
  { name: "Messages", art: svg`<path d="M32 8c15 0 26 9 26 21S48 50 32 50h-6q-4 5-12 7 4-4 3-10Q6 41 6 29C6 17 17 8 32 8z" fill="#2f96ee"/><path d="M42 30c9 0 15 5 15 12 0 5-2 8-5 10l2 5-8-3q-19 1-19-12c0-7 6-12 15-12z" fill="#f3f8fc"/><g fill="#2d6ea8"><circle cx="35" cy="42" r="2"/><circle cx="42" cy="42" r="2"/><circle cx="49" cy="42" r="2"/></g>` },
  { name: "FaceTime", art: svg`<rect x="6" y="9" width="47" height="42" rx="6" fill="#2fd455"/><rect x="13" y="20" width="23" height="20" rx="3" fill="#fff"/><path d="M38 27l9-5v16l-9-5z" fill="#fff"/><circle cx="46" cy="41" r="13" fill="#eef8f0"/><path d="M39 35l4-2 3 5-2 2q2 4 5 5l2-2 4 4-2 3q-12 2-14-15z" fill="#2bc04c"/>` },
  { name: "Pages", art: svg`<path d="M8 12l40-6 6 44-42 7z" fill="#f7f5f0"/><path d="M8 12l40-6 1 9-40 7z" fill="#f28c28"/>${txt(24, 19, 8, "#fff", "PAGES")}<rect x="14" y="25" width="16" height="12" fill="#3a94dd" transform="rotate(-8 22 31)"/><path d="M19 28l7-1-3 6z" fill="#f28c28"/>${range(6).map((i) => svg`<path d="M${14 + i / 2} ${41 + i * 2}l34-5" stroke="#aaa" stroke-dasharray="15 2"/>`)}<path d="M54 6l5 2-15 40-3 7-1-8z" fill="#ef8b2d"/><path d="M44 42l3 2-6 12z" fill="#333"/>` },
  { name: "Numbers", art: svg`<path d="M6 38h48v17H6z" fill="#f4f4f4"/><rect x="6" y="32" width="10" height="19" rx="1" fill="#e8395a"/><rect x="18" y="22" width="10" height="29" rx="1" fill="#f08b26"/><rect x="30" y="8" width="10" height="43" rx="1" fill="#2fb84a"/><rect x="42" y="16" width="10" height="35" rx="1" fill="#3aa3ee"/>` },
  { name: "Keynote", art: svg`<path d="M13 7h38l5 18H8z" fill="#2aa6ea"/><path d="M8 25h48v3H8z" fill="#167cc0"/><path d="M19 10h27l2 12H17z" fill="#f7f7f7"/><circle cx="25" cy="17" r="4" fill="#7fc24c"/><path d="M25 13a4 4 0 0 1 4 4h-4z" fill="#e84a5f"/><path d="M32 28v28" stroke="#d5dde2" stroke-width="3"/><ellipse cx="32" cy="56" rx="11" ry="4" fill="#b9d3e2"/>` },
  { name: "iTunes", art: svg`${disc("#fafafa", "#e65aa5")}<path d="M27 44V19l17-4v25" fill="none" stroke="#e8477c" stroke-width="4"/><path d="M25 20l21-5v6l-21 5z" fill="#e8477c"/><ellipse cx="23" cy="45" rx="6" ry="5" fill="#6a6ee8"/><ellipse cx="40" cy="41" rx="6" ry="5" fill="#8a5fe0"/>` },
  { name: "iBooks", art: svg`${disc("#f08427")}<path d="M31 21q-7-5-16-2v25q9-3 16 2zM33 21q7-5 16-2v25q-9-3-16 2z" fill="#fdf6ec"/>` },
  { name: "App Store", art: svg`${disc("#1f92f2")}<g stroke="#fff" stroke-width="4" stroke-linecap="round"><path d="M30 16l14 30M34 16L19 46M13 37h38"/></g>${badge("2")}` },
  { name: "Preferences", art: svg`<rect x="6" y="8" width="52" height="48" rx="3" fill="#a9b2b8"/><circle cx="32" cy="32" r="21" fill="none" stroke="#2b2b2b" stroke-width="4" stroke-dasharray="3 1"/><circle cx="32" cy="32" r="17" fill="#3b3d3f" stroke="#d0d0d0" stroke-width="3"/><g stroke="#c6c9cb" stroke-width="3"><path d="M32 32L18 26M32 32l13-8M32 32v15"/></g><circle cx="32" cy="32" r="5" fill="#c6c9cb"/>` },
  { name: "Terminal", on: true, art: svg`<rect x="6" y="9" width="51" height="45" rx="3" fill="#b9b9b9"/><rect x="8" y="11" width="47" height="41" rx="1" fill="#1c1c1c"/><path d="M13 17l6 4-6 4M21 26h7" stroke="#eee" stroke-width="2" fill="none"/>` },
  { name: "Acrobat", on: true, art: svg`<rect x="4" y="4" width="56" height="54" fill="#c01c12"/><path d="M4 4h56v22L4 40z" fill="#df281b"/><path d="M31 13q4-1 3 5-2 16-16 32-5 3-4 0 8-12 34-13 9 1 4 4-12 0-20-17-3-9-1-11z" fill="none" stroke="#fff" stroke-width="3"/>` },
  { name: "Slack", on: true, art: svg`<rect x="6" y="7" width="52" height="52" rx="6" fill="#fff"/><path d="M12 7h28l-6 14-28 12V13q0-6 6-6z" fill="#6ecadc"/><path d="M6 34l14-6 6 17-20 9z" fill="#3eb991"/><path d="M40 7l16 1 2 28-8 4z" fill="#e9a820"/><path d="M26 44l32-12v22q0 5-6 5H22z" fill="#e01765"/><path d="M18 24l24-9 9 24-24 9z" fill="#fff"/>${txt(33, 42, 30, "#3c1b40", "S", "Lato", "900")}${badge("•")}` },
  { name: "JIRA client", art: svg`<path d="M8 7h34v22q0 30-34 30V46q18 0 18-16V20H18Q8 18 8 7z" fill="#3d9fd6"/><rect x="48" y="7" width="13" height="52" rx="6" fill="#3d9fd6"/><circle cx="14" cy="34" r="8" fill="#f5912d"/>` },
  { name: "MySQL Workbench", art: svg`<rect x="4" y="4" width="57" height="57" rx="7" fill="#255781"/><path d="M12 12q12-4 20 9 5 10 12 14l10 14-8-1-4 6q-3-10-9-13l-5-7-5 12q-6-9-4-22z" fill="none" stroke="#fff" stroke-width="2"/><path d="M45 9l10 10M53 17l3 3" stroke="#eee" stroke-width="4"/>` },
  { name: "Android Studio", art: svg`<circle cx="32" cy="31" r="25" fill="#80b93f"/><path d="M7 31a25 25 0 0 1 50 0z" fill="#93cb4c"/><path d="M29 24L13 58M35 24l16 34" stroke="#f1f1f1" stroke-width="5"/><path d="M18 37q14 16 28 0" fill="none" stroke="#f1f1f1" stroke-width="4"/><circle cx="32" cy="26" r="6" fill="#b9d98a" stroke="#555" stroke-width="4"/><path d="M29 13h6v6h-6z" fill="#555"/>` },
  { name: "Zoom", on: true, art: svg`${disc("#2f8df5")}<rect x="15" y="23" width="24" height="18" rx="4" fill="#fff"/><path d="M40 29l9-6v18l-9-6z" fill="#fff"/>${badge("2")}` },
  { name: "Printer", on: true, art: svg`<path d="M6 22l10-6h36l9 7-3 26-36 7-15-14z" fill="#3a3a3c"/><path d="M14 16l4-3h28l4 6-30 4z" fill="#5a5a5d"/><path d="M6 22l15 7v26L7 42z" fill="#2b2b2d"/><path d="M23 28h34v6H23z" fill="#58606a"/><path d="M26 30h5M36 30h8" stroke="#c8d2da" stroke-width="2"/><path d="M26 40h27v7H26z" fill="#151516"/>` },
  { name: "Chrome", on: true, art: svg`<circle cx="32" cy="32" r="27" fill="#fbc940"/><path d="M32 32L9 18a27 27 0 0 1 46 0H32z" fill="#dd4b3e"/><path d="M32 32l-6 27A27 27 0 0 1 8 19l12 20z" fill="#1b9e57"/><path d="M9 18a27 27 0 0 1 47 2H32z" fill="#dd4b3e"/><circle cx="32" cy="32" r="12" fill="#fff"/><circle cx="32" cy="32" r="10" fill="#4584f0"/>` },
  { name: "Script Editor", on: true, art: svg`<rect x="4" y="5" width="57" height="54" rx="5" fill="#f7f7f8"/><path d="M26 19L10 33l16 14v-9l-7-5 7-5z" fill="#4b3fae"/><path d="M38 19l17 14-17 14v-9l7-5-7-5z" fill="#3d6bc0"/><path d="M36 18L28 48" stroke="#b9c3e6" stroke-width="3"/>` },
  { name: "XMarks", on: true, art: svg`<g stroke-linecap="round" stroke-width="13"><path d="M18 13l26 37" stroke="#3fa447"/><path d="M46 13L17 51" stroke="#57c25b"/></g>` },
  { name: "Pink", on: true, art: svg`<rect x="7" y="7" width="50" height="50" rx="4" fill="#fb1468"/><path d="M24 19v16M29 24v14M33 19v26M37 24v14M41 19v16" stroke="#fff" stroke-width="2"/>` },
  { name: "Sublime Text", on: true, art: svg`<path d="M9 10q1-3 5-3h36q4 0 5 3l4 43q0 2-3 2H7q-3 0-2-3z" fill="#e0e0e0"/><path d="M10 11q1-3 4-3h36q3 0 4 3l3 36H7z" fill="#4d4d4d"/><path d="M7 45h50v5H7z" fill="#222"/>${txt(32, 37, 32, "#f79a32", "S", "Liberation Sans", "bold")}` },
  { name: "Eclipse", on: true, art: svg`<circle cx="29" cy="32" r="26" fill="#f28a22"/><circle cx="35" cy="32" r="26" fill="#2c2255"/><path d="M9 26h52M9 32h52M9 38h52" stroke="#fff" stroke-width="3"/>` },
  { name: "Calculator", on: true, art: svg`<path d="M8 11l38-6 8 45-38 8z" fill="#d6d6d6"/><path d="M8 11l38-6 2 10-38 6z" fill="#3a3f3c"/><path d="M40 17l9-2 5 35-8 2z" fill="#f08a28"/><g stroke="#8d8d8d"><path d="M18 21l5 36M28 19l5 35M38 18l6 34M10 29l40-7M12 37l39-7M13 45l39-7M14 52l40-7"/></g>${txt(29, 16, 8, "#a9c2b0", "3.141593")}` },
  { name: "Firefox", on: true, art: svg`<circle cx="33" cy="30" r="24" fill="#1f6db8"/><path d="M36 10q14 4 16 16-6-2-8 6-8-4-14-2-2-14 6-20z" fill="#57b6e6"/><path d="M8 12q3 3 7 4 5-5 11-4-4 4-3 9 6 1 10 4-7 3-6 8 4 8 14 4 5 3-3 7 15 2 17-13 0-12-8-20 13 7 14 22-2 26-29 27Q9 58 5 36 4 22 8 12z" fill="#ee7423"/><path d="M53 14q12 14 5 30-8 15-24 16 18-6 21-20 2-14-2-26z" fill="#fbc735"/>` },
  { name: "Skype", on: true, art: svg`<path d="M5 19C5 8 16 2 25 8c18-4 33 10 29 28 7 12-4 26-17 22C20 62 6 48 9 32q-4-6-4-13z" fill="#1fa6e6"/>${txt(31, 49, 46, "#fff", "S", "Lato", "900")}${badge("1")}` },
  { name: "VLC", art: svg`<path d="M11 41h42l5 18H6z" fill="#ef8519"/><path d="M28 5q4-3 8 0l13 42q-17 10-34 0z" fill="#f28a1c"/><path d="M26 12h12l3 11H23zM20 33h24l3 10q-15 6-30 0z" fill="#e9e9e9"/>` },
  { name: "IntelliJ IDEA", on: true, art: svg`<path d="M10 5l18 8-6 20L6 26z" fill="#f5397b"/><path d="M40 5l19 14v22L42 60 28 47z" fill="#2a80ea"/><path d="M5 28l14 8-4 14z" fill="#f78c3b"/><path d="M28 9l14-2-4 20H26z" fill="#7b5cdb"/><path d="M14 44l14-6-18 20z" fill="#a44fc0"/><rect x="14" y="15" width="35" height="34" fill="#0b0b0b"/><path d="M18 44h12" stroke="#fff" stroke-width="2"/>${txt(28, 33, 19, "#fff", "IJ", "Liberation Mono", "bold")}` },
  { name: "FileZilla", on: true, art: svg`<rect x="4" y="4" width="57" height="57" fill="#b10a10" stroke="#b10a10" stroke-width="4" stroke-dasharray="4 3"/><path d="M42 13H23l-9 40M19 31h17M32 33h19L34 52h17" fill="none" stroke="#fff" stroke-width="8"/>` },
  { name: "Dictionary", on: true, art: svg`<path d="M8 12l36-7 9 42-2 5-38 7q-3-23-5-47z" fill="#7b5e4a"/><path d="M8 12q1-3 4-4l30-4q3 0 4 3l6 40-39 8q-4-20-5-43z" fill="#a9383b"/>${txt(28, 19, 8, "#efc7c2", "Dictionary", "Liberation Serif")}${txt(31, 41, 22, "#f5e4df", "Aa", "Liberation Serif")}` },
];
const PLACES: App[] = [
  { name: "Stack", art: svg`<path d="M12 5h28l10 9v16H12z" fill="#f4f4f4"/><rect x="10" y="14" width="44" height="16" fill="#e6f1f3"/><rect x="10" y="14" width="44" height="6" fill="#35b7cf"/><rect x="7" y="27" width="50" height="18" fill="#0b0b0b" stroke="#eee" stroke-width="2"/><path d="M12 32h30M12 36h24" stroke="#3c4a3c"/>` },
  { name: "Trash", art: svg`<path d="M11 9h42l-6 47q-15 6-30 0z" fill="#d5d7d8"/><path d="M11 9h42l-1 9H12z" fill="#8b8b8b"/><path d="M14 13l8-8 7 6 8-7 6 8 8-3v8H14z" fill="#f2f2f2"/><path d="M22 9l3 5M38 8l3 5" stroke="#2b7bc0" stroke-width="3"/><path d="M20 20l3 34M32 20v36M44 20l-3 34" stroke="#f0f0f0" stroke-width="2"/><ellipse cx="32" cy="9" rx="21" ry="4" fill="none" stroke="#eee" stroke-width="2"/>` },
];

@customElement("mac-dock")
class MacDock extends LitElement {
  static styles = css`
    :host { display: block; }
    .dock { display: flex; height: 82px; box-sizing: border-box; padding: 6px 5px 0; border-radius: 12px 12px 0 0; overflow: hidden;
      background: linear-gradient(90deg, #716b72, #6b6a6f 40%, #616161 75%, #6a6768); }
    .app { border: 0; background: none; padding: 0; width: 64px; flex: 0 1 64px; display: flex; flex-direction: column; align-items: center; gap: 2px; }
    .art { width: 64px; height: 64px; flex: none; display: block; }
    .dot { width: 6px; height: 6px; border-radius: 50%; background: #000; }
    .sep { width: 2px; height: 58px; background: #444; margin: 6px 12px 0; }
  `;
  app(a: App): TemplateResult {
    return html`<button class="app" aria-label=${a.name}><svg class="art" viewBox="0 0 64 64"><defs><linearGradient id="g-blue" x2="0" y2="1"><stop stop-color="#22b5f5"/><stop offset="1" stop-color="#1f6fe8"/></linearGradient></defs>${a.art}</svg>${a.on ? html`<span class="dot"></span>` : ""}</button>`;
  }
  render() {
    return html`<div class="dock">${APPS.map((a) => this.app(a))}<span class="sep"></span>${PLACES.map((a) => this.app(a))}</div>`;
  }
}

@customElement("app-root")
class AppRoot extends LitElement {
  static styles = css`
    :host { display: block; }
    .desk { display: grid; grid-template-rows: auto 1fr auto; height: 100vh; overflow: hidden;
      background: radial-gradient(26px 14px at 16px calc(100% - 54px), #5a5650, transparent), radial-gradient(20px 22px at 34px calc(100% - 14px), #3c3c4a, transparent), #17171d; }
    .area { position: relative; overflow: hidden; background: #fff; }
    .back { position: absolute; inset: 0 0 0 auto; width: 66px; }
    .front { position: absolute; inset: 0 66px 0 0; background: #fefefe; border-radius: 10px; overflow: hidden; box-shadow: 0 0 0 1px #0005, 0 20px 60px 6px #000a; }
    .toast { position: absolute; left: 1062px; bottom: 0; width: 674px; height: 96px; box-sizing: border-box; display: flex; align-items: center; padding: 0 47px; border-radius: 4px; background: #323232; color: #fff; font: 28px/40px "Liberation Sans", Arial, sans-serif; white-space: nowrap; -webkit-text-stroke: 1px #fff; box-shadow: 0 0 24px #0003; z-index: 2; }
    .dock { position: relative; margin: 0 46px; border-radius: 12px 12px 0 0; box-shadow: 0 0 80px #0000002b; }
  `;
  render() {
    return html`<div class="desk">
      <menu-bar></menu-bar>
      <div class="area">
        <back-window class="back"></back-window>
        <div class="front"><browser-chrome></browser-chrome><demo-page></demo-page><div class="toast" role="status">you don't have permission to delete this folder</div></div>
      </div>
      <mac-dock class="dock"></mac-dock>
    </div>`;
  }
}
